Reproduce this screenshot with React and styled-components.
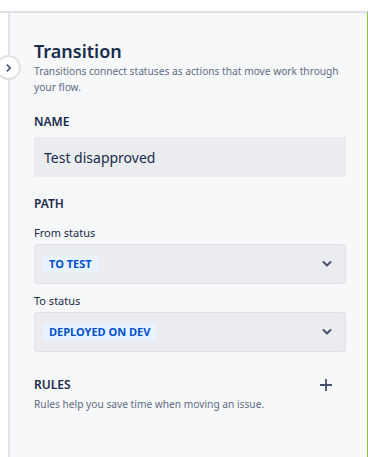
import React from 'react';
import styled, { createGlobalStyle } from 'styled-components';

const GlobalStyle = createGlobalStyle`
  html, body {
    margin: 0;
    padding: 0;
    background: #ffffff;
    font-family: "Noto Sans", "Open Sans", sans-serif;
    color: #172b4d;
  }
`;

const palette = {
  text: '#172b4d',
  subtle: '#5e6c84',
  panel: '#f7f8f9',
  field: '#ebecf0',
  border: '#dfe1e6',
  blue: '#0052cc',
  blueBg: '#e9f2ff',
};

const Page = styled.div`
  width: 368px;
  height: 457px;
  padding-top: 11px;
  box-sizing: border-box;
  background: #ffffff;
  overflow: hidden;
`;

const Frame = styled.div`
  height: 100%;
  border-top: 2px solid ${palette.border};
  border-right: 1px solid #8bc34a;
  padding-left: 8px;
  box-sizing: border-box;
  display: flex;
`;

const Panel = styled.aside`
  position: relative;
  flex: 1;
  background: ${palette.panel};
  border-left: 2px solid ${palette.border};
  padding: 26px 21px 0 24px;
`;

const CollapseButton = styled.button`
  position: absolute;
  left: -14px;
  top: 42px;
  width: 25px;
  height: 25px;
  border-radius: 50%;
  border: 2px solid ${palette.border};
  background: #ffffff;
  padding: 0;
  display: flex;
  align-items: center;
  justify-content: center;
  color: #42526e;
`;

const Title = styled.h2`
  margin: 0;
  font-size: 18px;
  font-weight: 600;
  line-height: 24px;
  color: ${palette.text};
`;

const Description = styled.p`
  margin: ${(p) => p.$top || 0}px 0 0;
  font-size: 10.2px;
  line-height: 16px;
  color: ${palette.subtle};
`;

const SectionTitle = styled.h3`
  margin: ${(p) => p.$top || 0}px 0 0;
  font-size: 12px;
  font-weight: 600;
  line-height: 16px;
  color: ${palette.text};
  display: flex;
  align-items: center;
  justify-content: space-between;
`;

const FieldLabel = styled.div`
  margin-top: ${(p) => p.$top || 0}px;
  font-size: 11px;
  line-height: 16px;
  color: ${palette.text};
`;

const TextField = styled.div`
  margin-top: 7px;
  height: 40px;
  background: ${palette.field};
  display: flex;
  align-items: center;
  padding: 0 10px;
  font-size: 14px;
  color: ${palette.text};
`;

const Select = styled.div`
  margin-top: 3px;
  height: 40px;
  box-sizing: border-box;
  background: ${palette.field};
  border: 1px solid ${palette.border};
  border-radius: 3px;
  display: flex;
  align-items: center;
  justify-content: space-between;
  padding: 0 12px 0 8px;
`;

const Lozenge = styled.span`
  background: ${palette.blueBg};
  color: ${palette.blue};
  font-size: 11px;
  font-weight: 700;
  line-height: 18px;
  padding: 0 6px;
  border-radius: 3px;
  text-transform: uppercase;
`;

const IconButton = styled.span`
  display: flex;
  color: #42526e;
`;

const AddButton = styled.span`
  display: flex;
  margin-right: 13px;
`;

const Chevron = ({ dir = 'down', size = 12 }) => (
  <svg width={size} height={size} viewBox="0 0 24 24">
    <path
      d={dir === 'down' ? 'M5 8l7 7 7-7' : 'M8 5l7 7-7 7'}
      fill="none"
      stroke="currentColor"
      strokeWidth="4"
      strokeLinecap="round"
      strokeLinejoin="round"
    />
  </svg>
);

const Plus = () => (
  <svg width="14" height="14" viewBox="0 0 14 14">
    <path d="M7 1v12M1 7h12" stroke="#42526e" strokeWidth="1.8" />
  </svg>
);

const StatusSelect = ({ value }) => (
  <Select>
    <Lozenge>{value}</Lozenge>
    <IconButton>
      <Chevron />
    </IconButton>
  </Select>
);

export default function App() {
  return (
    <>
      <GlobalStyle />
      <Page>
        <Frame>
          <Panel>
            <CollapseButton>
              <Chevron dir="right" size={10} />
            </CollapseButton>
            <Title>Transition</Title>
            <Description>
              Transitions connect statuses as actions that move work through
              your flow.
            </Description>

            <SectionTitle $top={19}>NAME</SectionTitle>
            <TextField>Test disapproved</TextField>

            <SectionTitle $top={19}>PATH</SectionTitle>
            <FieldLabel $top={13}>From status</FieldLabel>
            <StatusSelect value="To test" />
            <FieldLabel $top={9}>To status</FieldLabel>
            <StatusSelect value="Deployed on dev" />

            <SectionTitle $top={25}>
              RULES
              <AddButton>
                <Plus />
              </AddButton>
            </SectionTitle>
            <Description $top={3}>
              Rules help you save time when moving an issue.
            </Description>
          </Panel>
        </Frame>
      </Page>
    </>
  );
}
